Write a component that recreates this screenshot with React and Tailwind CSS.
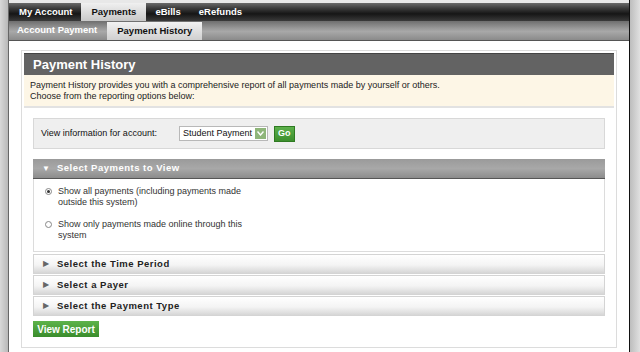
import { useState } from 'react'

const font = { fontFamily: '"Liberation Sans", Arial, sans-serif' }

function Collapsed({ title }) {
  return (
    <div className="flex h-[20px] items-center border border-[#d4d4d4] bg-[linear-gradient(#ffffff,#f4f4f4_55%,#d6d6d6)] pl-[9px]">
      <span className="mr-[8px] text-[8px] leading-none text-[#666]">&#9654;</span>
      <span className="text-[9.5px] font-bold tracking-[0.5px] text-[#222]">{title}</span>
    </div>
  )
}

export default function App() {
  const [choice, setChoice] = useState('all')

  return (
    <div className="flex h-[352px] w-[640px] overflow-hidden bg-white" style={font}>
      <div className="w-[9px] shrink-0 border-r border-[#666] bg-[linear-gradient(90deg,#d8d8d8,#b8b8b8)]" />

      <div className="flex min-w-0 flex-1 flex-col">
        <div className="flex h-[21px] items-end border-t-[3px] border-t-[#e8e8e8] bg-[linear-gradient(#6a6a6a,#3a3a3a_30%,#161616_60%,#3a3a3a)] pl-[1px]">
          <div className="flex h-full items-center pl-[9px] pr-[9px] text-[9.5px] font-bold text-white">My Account</div>
          <div className="flex h-[18px] items-center bg-[linear-gradient(#f0f0f0,#c8c8c8)] px-[10px] text-[9.5px] font-bold text-[#111]">Payments</div>
          <div className="flex h-full items-center px-[9px] text-[9.5px] font-bold text-white">eBills</div>
          <div className="flex h-full items-center px-[9px] text-[9.5px] font-bold text-white">eRefunds</div>
        </div>

        <div className="flex h-[20px] items-end border-b border-[#555] bg-[linear-gradient(#6e6e6e,#9a9a9a_40%,#a8a8a8_55%,#8a8a8a)]">
          <div className="flex h-full items-center pl-[8px] pr-[9px] text-[9.5px] font-bold text-white">Account Payment</div>
          <div className="ml-[1px] flex h-[18px] items-center bg-[linear-gradient(#f2f2f2,#cfcfcf)] px-[10px] text-[9.5px] font-bold text-[#111]">Payment History</div>
        </div>

        <div className="ml-[12px] mr-[12px] mt-[9px] h-[298px] border border-[#dcdcdc] p-[2px] pb-0">
          <div className="flex h-[22px] items-center border-t border-[#444] bg-[#636363] pl-[9px] text-[13px] font-bold text-white">
            Payment History
          </div>
          <div className="border-b-2 border-[#e2e2e2] bg-[#fdf6e6] px-[6px] pb-[4px] pt-[5px] text-[9px] leading-[11px] text-[#222]">
            <p>Payment History provides you with a comprehensive report of all payments made by yourself or others.</p>
            <p>Choose from the reporting options below:</p>
          </div>

          <div className="px-[9px] pt-[10px]">
            <div className="flex h-[31px] items-center border border-[#d8d8d8] bg-[#efefef] pl-[7px]">
              <span className="w-[138px] text-[9px] text-[#111]">View information for account:</span>
              <div className="flex h-[15px] items-center border border-[#b8b8b8] bg-white pl-[3px] pr-[1px]">
                <span className="mr-[3px] text-[9px] text-[#111]">Student Payment</span>
                <div className="flex h-[11px] w-[11px] items-center justify-center bg-[#8fb67a]">
                  <svg width="7" height="5" viewBox="0 0 7 5"><path d="M0.5 0.5 L3.5 4 L6.5 0.5" fill="none" stroke="#fff" strokeWidth="1.4" /></svg>
                </div>
              </div>
              <div className="ml-[6px] flex h-[16px] items-center border border-[#2f7a22] bg-[linear-gradient(#5cb04a,#3d8f2e)] px-[3px] text-[9px] font-bold text-white">
                Go
              </div>
            </div>

            <div className="mt-[10px] flex h-[20px] items-center border-b border-[#555] bg-[linear-gradient(#9a9a9a,#a8a8a8_50%,#8c8c8c)] pl-[9px]">
              <span className="mr-[7px] text-[8px] leading-none text-white">&#9660;</span>
              <span className="text-[9.5px] font-bold tracking-[0.5px] text-white">Select Payments to View</span>
            </div>
            <div className="h-[73px] border border-t-0 border-[#dcdcdc] bg-white pl-[11px] pt-[7px] text-[9px] leading-[11px] text-[#333]">
              <label className="flex items-start" onClick={() => setChoice('all')}>
                <span className="mr-[6px] mt-[2px] flex h-[7px] w-[7px] items-center justify-center rounded-full border border-[#888]">
                  {choice === 'all' && <span className="h-[3px] w-[3px] rounded-full bg-[#333]" />}
                </span>
                <span>Show all payments (including payments made<br />outside this system)</span>
              </label>
              <label className="mt-[11px] flex items-start" onClick={() => setChoice('online')}>
                <span className="mr-[6px] mt-[2px] flex h-[7px] w-[7px] items-center justify-center rounded-full border border-[#888]">
                  {choice === 'online' && <span className="h-[3px] w-[3px] rounded-full bg-[#333]" />}
                </span>
                <span>Show only payments made online through this<br />system</span>
              </label>
            </div>

            <div className="mt-[2px] flex flex-col gap-[1px]">
              <Collapsed title="Select the Time Period" />
              <Collapsed title="Select a Payer" />
              <Collapsed title="Select the Payment Type" />
            </div>

            <div className="mt-[5px] flex h-[16px] w-[66px] items-center justify-center bg-[linear-gradient(#5db34a,#3a8c2c)] text-[10px] font-bold text-white">
              View Report
            </div>
          </div>
        </div>
      </div>

      <div className="w-[11px] shrink-0 border-l border-[#111] bg-[linear-gradient(90deg,#bdbdbd,#e0e0e0)]" />
    </div>
  )
}
